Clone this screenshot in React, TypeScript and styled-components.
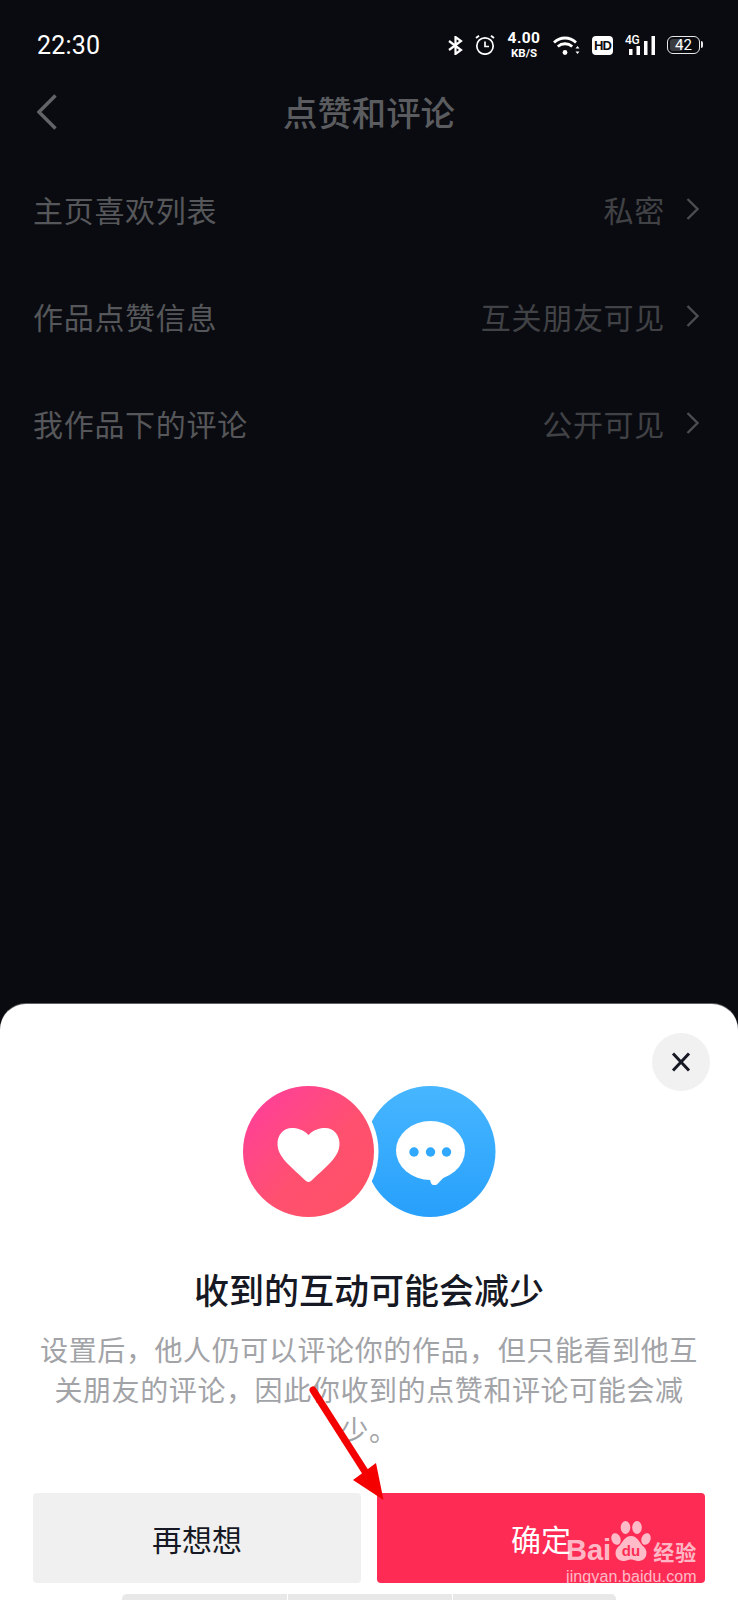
import React from "react";
import styled, { createGlobalStyle } from "styled-components";

const CJK = `"Noto Sans CJK SC", "Noto Sans", sans-serif`;

const GlobalStyle = createGlobalStyle`
  html, body {
    margin: 0;
    padding: 0;
    background: #0a0b10;
  }
  * {
    box-sizing: border-box;
  }
`;

const Page = styled.div`
  position: relative;
  width: 738px;
  height: 1600px;
  overflow: hidden;
  display: flex;
  flex-direction: column;
  background: #0a0b10;
  font-family: ${CJK};
`;

const StatusBar = styled.div`
  height: 90px;
  display: flex;
  align-items: center;
  justify-content: space-between;
  padding: 0 36px 0 37px;
  color: #fff;
`;

const Clock = styled.span`
  font-family: Roboto, sans-serif;
  font-size: 25px;
  font-weight: 400;
  letter-spacing: 0.2px;
`;

const StatusIcons = styled.div`
  display: flex;
  align-items: center;
  gap: 12px;
`;

const Speed = styled.div`
  width: 34px;
  display: flex;
  flex-direction: column;
  align-items: center;
  font-family: Roboto, sans-serif;
  font-weight: 700;
  line-height: 1;
`;

const SpeedValue = styled.span`
  font-size: 15.5px;
  letter-spacing: 0.4px;
`;

const SpeedUnit = styled.span`
  font-size: 11.5px;
  margin-top: 1px;
`;

const HdBadge = styled.span`
  width: 21px;
  height: 19px;
  border-radius: 4px;
  background: #fff;
  color: #0a0b10;
  display: flex;
  align-items: center;
  justify-content: center;
  font-family: "Liberation Sans", sans-serif;
  font-size: 13px;
  font-weight: 700;
  letter-spacing: -0.8px;
`;

const Signal = styled.div`
  position: relative;
  width: 30px;
  height: 19px;
`;

const SignalLabel = styled.span`
  position: absolute;
  left: 0;
  top: -1px;
  font-family: Roboto, sans-serif;
  font-size: 12px;
  line-height: 11px;
  font-weight: 500;
  letter-spacing: -0.3px;
`;

const Battery = styled.div`
  position: relative;
  width: 33px;
  height: 18px;
  margin-right: 2px;
  border: 1.5px solid #e8e8e8;
  border-radius: 6px;
  display: flex;
  align-items: center;
  justify-content: center;
  font-family: Roboto, sans-serif;
  font-size: 15px;
  color: #fff;
  &::before {
    content: "";
    position: absolute;
    left: 2px;
    top: 2px;
    bottom: 2px;
    width: 42%;
    border-radius: 3px;
    background: #3c3d41;
  }
  &::after {
    content: "";
    position: absolute;
    right: -4px;
    top: 4px;
    width: 2px;
    height: 7px;
    border-radius: 0 2px 2px 0;
    background: #e8e8e8;
  }
`;

const BatteryLevel = styled.span`
  position: relative;
`;

const NavBar = styled.header`
  height: 44px;
  display: grid;
  grid-template-columns: 1fr auto 1fr;
  align-items: center;
  padding: 0 37px;
`;

const NavTitle = styled.h1`
  margin: -2px 0 0;
  font-size: 34.4px;
  line-height: 44px;
  font-weight: 500;
  color: #5b5c5f;
`;

const SettingsList = styled.div`
  margin-top: 21px;
  display: flex;
  flex-direction: column;
`;

const Row = styled.div`
  height: 107px;
  display: flex;
  align-items: center;
  justify-content: space-between;
  padding: 0 39px 0 33px;
  font-size: 30px;
  letter-spacing: 0.7px;
`;

const RowLabel = styled.span`
  color: #56575a;
`;

const RowValue = styled.span`
  display: flex;
  align-items: center;
  gap: 21px;
  color: #414246;
`;

const Sheet = styled.section`
  position: relative;
  margin-top: auto;
  height: 596px;
  padding-top: 82px;
  display: flex;
  flex-direction: column;
  align-items: center;
  background: #fff;
  border-radius: 26px 26px 0 0;
  box-shadow: 0 -1px 0 rgba(255, 255, 255, 0.35);
`;

const CloseButton = styled.div`
  position: absolute;
  top: 29px;
  right: 28px;
  width: 58px;
  height: 58px;
  border-radius: 50%;
  background: #f1f1f2;
  display: flex;
  align-items: center;
  justify-content: center;
`;

const SheetTitle = styled.h2`
  margin: 48px 0 0;
  font-size: 35px;
  line-height: 48px;
  font-weight: 500;
  color: #161823;
`;

const SheetText = styled.p`
  margin: 16px 0 0;
  width: 668px;
  font-size: 28px;
  letter-spacing: 0.6px;
  line-height: 40px;
  text-align: center;
  color: #a2a3a7;
`;

const Actions = styled.div`
  margin-top: 44px;
  width: 100%;
  padding: 0 33px;
  display: grid;
  grid-template-columns: 1fr 1fr;
  gap: 16px;
`;

const ActionButton = styled.div<{ $primary?: boolean }>`
  height: 90px;
  border-radius: 4px;
  display: flex;
  align-items: center;
  justify-content: center;
  font-size: 30px;
  background: ${(p) => (p.$primary ? "#fe2c55" : "#f0f0f0")};
  color: ${(p) => (p.$primary ? "#fff" : "#161823")};
`;

const PeekBar = styled.div`
  margin: 11px 0 0 -1px;
  width: 494px;
  height: 6px;
  display: grid;
  grid-template-columns: 165px 164px 1fr;
  gap: 1px;
  border-radius: 5px 5px 0 0;
  overflow: hidden;
`;

const PeekSegment = styled.span`
  background: #e8e8e8;
`;

const ArrowOverlay = styled.svg`
  position: absolute;
  left: 300px;
  top: 1380px;
`;

const Watermark = styled.div`
  position: absolute;
  left: 566px;
  top: 1521px;
  width: 132px;
  color: rgba(255, 255, 255, 0.68);
`;

const WatermarkLogo = styled.div`
  display: flex;
  align-items: flex-end;
  height: 41px;
`;

const WatermarkBai = styled.span`
  font-family: "Liberation Sans", sans-serif;
  font-size: 29px;
  font-weight: 700;
  line-height: 29px;
  margin-bottom: -3px;
`;

const WatermarkCn = styled.span`
  font-size: 21px;
  font-weight: 700;
  line-height: 21px;
  letter-spacing: 1px;
  margin-left: 2px;
`;

const WatermarkUrl = styled.div`
  margin-top: 5px;
  font-family: "Liberation Sans", sans-serif;
  font-size: 16px;
  line-height: 20px;
  letter-spacing: 0.1px;
  white-space: nowrap;
`;

function Bluetooth() {
  return (
    <svg width="15" height="19" viewBox="0 0 15 19" fill="none" stroke="#fff" strokeWidth="2.2">
      <path d="M1 5l12 9-5.5 4V1L13 5 1 14" />
    </svg>
  );
}

function Alarm() {
  return (
    <svg width="20" height="20" viewBox="0 0 20 20" fill="none" stroke="#fff" strokeWidth="1.7">
      <circle cx="10" cy="11" r="8.2" />
      <path d="M10 6.5V11.5H14" />
      <path d="M1 3L4 0.8M19 3L16 0.8" strokeWidth="2" />
    </svg>
  );
}

function Wifi() {
  return (
    <svg width="27" height="19" viewBox="0 0 27 19" fill="none" stroke="#fff" strokeWidth="2.8">
      <path d="M1 6.5C7.5 0.5 16.5 0.5 23 6.5" />
      <path d="M4.8 10.5C9 6.8 15 6.8 19.2 10.5" />
      <circle cx="12" cy="16.5" r="2.4" fill="#fff" stroke="none" />
      <path d="M22.5 12.5L24.5 10L26.5 12.5ZM22.5 15.5L24.5 18L26.5 15.5Z" fill="#fff" stroke="none" />
    </svg>
  );
}

function Bars() {
  return (
    <svg width="26" height="19" viewBox="0 0 26 19" fill="#fff" style={{ position: "absolute", left: 4, top: 0 }}>
      <rect x="0" y="13" width="3.5" height="6" />
      <rect x="7.5" y="10" width="3.5" height="9" />
      <rect x="15" y="5" width="3.5" height="14" />
      <rect x="22.5" y="0" width="3.5" height="19" />
    </svg>
  );
}

function BackChevron() {
  return (
    <svg width="20" height="36" viewBox="0 0 20 36" fill="none" stroke="#636467" strokeWidth="3.4">
      <path d="M18.5 1.5L2 18L18.5 34.5" />
    </svg>
  );
}

function RowChevron() {
  return (
    <svg width="13" height="22" viewBox="0 0 13 22" fill="none" stroke="#4b4c50" strokeWidth="2.4">
      <path d="M1.5 1L11.5 11L1.5 21" />
    </svg>
  );
}

function CloseGlyph() {
  return (
    <svg width="20" height="20" viewBox="0 0 20 20" fill="none" stroke="#161823" strokeWidth="3">
      <path d="M2 1.5L18 18.5M18 1.5L2 18.5" />
    </svg>
  );
}

function InteractionLogo() {
  return (
    <svg width="254" height="131" viewBox="0 0 254 131" style={{ marginLeft: 2 }}>
      <defs>
        <linearGradient id="pinkFill" x1="0.1" y1="0.1" x2="0.85" y2="0.85">
          <stop offset="0" stopColor="#ff4098" />
          <stop offset="0.6" stopColor="#ff5070" />
          <stop offset="1" stopColor="#ff5267" />
        </linearGradient>
        <linearGradient id="blueFill" x1="0.5" y1="0" x2="0.5" y2="1">
          <stop offset="0" stopColor="#47b6ff" />
          <stop offset="1" stopColor="#27a0fc" />
        </linearGradient>
      </defs>
      <circle cx="187" cy="65.5" r="65.5" fill="url(#blueFill)" />
      <circle cx="65.5" cy="65.5" r="70" fill="#fff" />
      <circle cx="65.5" cy="65.5" r="65.5" fill="url(#pinkFill)" />
      <path
        d="M65.5 49C60 43.5 54 42 49 42C40 42 34.5 49.5 34.5 57.5C34.5 66 39 72 46 79C52 85 59 91 63 95C64.5 96.4 66.5 96.4 68 95C72 91 79 85 85 79C92 72 96.5 66 96.5 57.5C96.5 49.5 91 42 82 42C77 42 71 43.5 65.5 49Z"
        fill="#fff"
      />
      <ellipse cx="187.5" cy="64.5" rx="34.5" ry="29.5" fill="#fff" />
      <path d="M186 91L188 97C189 99.5 192 99.5 194 98.5L204 88Z" fill="#fff" />
      <circle cx="171" cy="66" r="4.7" fill="#2fa8fd" />
      <circle cx="187.5" cy="66" r="4.7" fill="#2fa8fd" />
      <circle cx="203.5" cy="66" r="4.7" fill="#2fa8fd" />
    </svg>
  );
}

function BaiduPaw() {
  return (
    <svg width="40" height="41" viewBox="0 0 40 41">
      <g fill="rgba(255,255,255,0.68)">
        <ellipse cx="5" cy="18" rx="4.5" ry="6" transform="rotate(-20 5 18)" />
        <ellipse cx="14.5" cy="6.5" rx="4.8" ry="6.5" />
        <ellipse cx="26" cy="6.5" rx="4.8" ry="6.5" />
        <ellipse cx="35" cy="18" rx="4.5" ry="6" transform="rotate(20 35 18)" />
        <path d="M20 15C27 15 28 22 33 26C38 31 35 40 28 40C24 40 23 38.5 20 38.5C17 38.5 16 40 12 40C5 40 2 31 7 26C12 22 13 15 20 15Z" />
      </g>
      <text x="20" y="35" textAnchor="middle" fontFamily="Liberation Sans, sans-serif" fontSize="15" fontWeight="700" fill="#fe2c55">
        du
      </text>
    </svg>
  );
}

const rows = [
  { label: "主页喜欢列表", value: "私密" },
  { label: "作品点赞信息", value: "互关朋友可见" },
  { label: "我作品下的评论", value: "公开可见" },
];

export default function App() {
  return (
    <Page>
      <GlobalStyle />
      <StatusBar>
        <Clock>22:30</Clock>
        <StatusIcons>
          <Bluetooth />
          <Alarm />
          <Speed>
            <SpeedValue>4.00</SpeedValue>
            <SpeedUnit>KB/S</SpeedUnit>
          </Speed>
          <Wifi />
          <HdBadge>HD</HdBadge>
          <Signal>
            <SignalLabel>4G</SignalLabel>
            <Bars />
          </Signal>
          <Battery>
            <BatteryLevel>42</BatteryLevel>
          </Battery>
        </StatusIcons>
      </StatusBar>

      <NavBar>
        <BackChevron />
        <NavTitle>点赞和评论</NavTitle>
      </NavBar>

      <SettingsList>
        {rows.map((row) => (
          <Row key={row.label}>
            <RowLabel>{row.label}</RowLabel>
            <RowValue>
              {row.value}
              <RowChevron />
            </RowValue>
          </Row>
        ))}
      </SettingsList>

      <Sheet>
        <CloseButton>
          <CloseGlyph />
        </CloseButton>
        <InteractionLogo />
        <SheetTitle>收到的互动可能会减少</SheetTitle>
        <SheetText>
          设置后，他人仍可以评论你的作品，但只能看到他互关朋友的评论，因此你收到的点赞和评论可能会减少。
        </SheetText>
        <Actions>
          <ActionButton>再想想</ActionButton>
          <ActionButton $primary>确定</ActionButton>
        </Actions>
        <PeekBar>
          <PeekSegment />
          <PeekSegment />
          <PeekSegment />
        </PeekBar>
      </Sheet>

      <ArrowOverlay width="90" height="125" viewBox="300 1380 90 125">
        <path d="M313 1390L366 1473" stroke="#f40000" strokeWidth="7" strokeLinecap="round" />
        <path d="M353 1480L376 1463L383.5 1500Z" fill="#f40000" />
      </ArrowOverlay>

      <Watermark>
        <WatermarkLogo>
          <WatermarkBai>Bai</WatermarkBai>
          <BaiduPaw />
          <WatermarkCn>经验</WatermarkCn>
        </WatermarkLogo>
        <WatermarkUrl>jingyan.baidu.com</WatermarkUrl>
      </Watermark>
    </Page>
  );
}
